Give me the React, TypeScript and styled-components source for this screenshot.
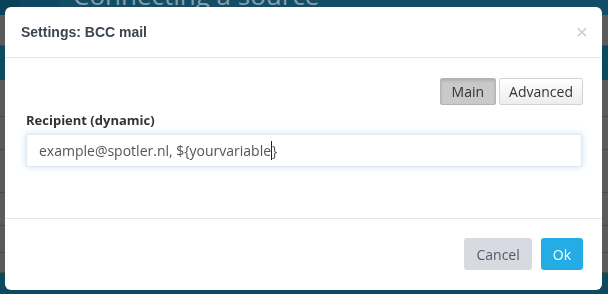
import React from 'react';
import styled, { createGlobalStyle } from 'styled-components';

const GlobalStyle = createGlobalStyle`
  html, body {
    margin: 0;
    padding: 0;
    width: 608px;
    height: 294px;
    overflow: hidden;
    background: #5b5b5b;
  }
  * {
    box-sizing: border-box;
  }
`;

const App = () => {
  return (
    <>
      <GlobalStyle />
      <Page>
        <TopBar>
          <TopBarLogo />
          <TopBarTab />
          <PageTitle>Connecting a source</PageTitle>
        </TopBar>
        <Band tone="gray" size={31} />
        <Band tone="teal" size={34} />
        <Band tone="gray" size={37} />
        <Band tone="gray" size={33} />
        <Band tone="gray" size={43} />
        <Band tone="gray" size={33} />
        <Band tone="gray" size={27} />
        <Band tone="gray" size={20} />
        <Band tone="teal" size={30} />
      </Page>
      <Modal>
        <Header>
          <Title>Settings: BCC mail</Title>
          <Close>×</Close>
        </Header>
        <Body>
          <TabRow>
            <TabButton active>Main</TabButton>
            <TabButton>Advanced</TabButton>
          </TabRow>
          <Label>Recipient (dynamic)</Label>
          <Input>
            example@spotler.nl, $&#123;yourvariabl<Caret>e</Caret>&#125;
          </Input>
        </Body>
        <Footer>
          <FooterButton>Cancel</FooterButton>
          <FooterButton primary>Ok</FooterButton>
        </Footer>
      </Modal>
    </>
  );
};

export default App;

const Page = styled.div`
  display: flex;
  flex-direction: column;
  width: 608px;
  height: 294px;
  overflow: hidden;
`;

const TopBar = styled.div`
  display: flex;
  flex-direction: row;
  align-items: flex-end;
  height: 15px;
  flex-shrink: 0;
  background-color: #114e66;
  overflow: hidden;
`;

const TopBarLogo = styled.div`
  width: 20px;
  height: 15px;
  background-color: #0b4259;
`;

const TopBarTab = styled.div`
  width: 40px;
  height: 15px;
  background-color: #0e4860;
`;

const PageTitle = styled.div`
  margin-left: 13px;
  margin-bottom: 7px;
  font-family: 'Open Sans', sans-serif;
  font-size: 26px;
  line-height: 26px;
  color: #8a9ca8;
  white-space: nowrap;
`;

const Band = styled.div<{ tone: 'gray' | 'teal'; size: number }>`
  height: ${({ size }) => size + 'px'};
  flex-shrink: 0;
  background-color: ${({ tone }) => (tone === 'teal' ? '#0c4a60' : '#5b5b5b')};
  border-bottom: 1px solid ${({ tone }) => (tone === 'teal' ? '#0c4a60' : '#4a4a4a')};
`;

const Modal = styled.div`
  position: fixed;
  left: 5px;
  top: 7px;
  width: 597px;
  height: 283px;
  display: flex;
  flex-direction: column;
  background-color: #ffffff;
  border-radius: 6px;
  overflow: hidden;
`;

const Header = styled.div`
  display: flex;
  flex-direction: row;
  justify-content: space-between;
  align-items: center;
  height: 51px;
  padding: 0 14px 1px 16px;
  border-bottom: 1px solid #e5e5e5;
`;

const Title = styled.div`
  font-family: 'Liberation Sans', Arial, sans-serif;
  font-weight: bold;
  font-size: 14px;
  color: #3b4451;
`;

const Close = styled.div`
  font-family: 'Liberation Sans', Arial, sans-serif;
  font-size: 21px;
  line-height: 20px;
  color: #cccccc;
`;

const Body = styled.div`
  flex: 1;
  display: flex;
  flex-direction: column;
  padding: 20px 19px 0 21px;
`;

const TabRow = styled.div`
  display: flex;
  flex-direction: row;
  justify-content: flex-end;
  gap: 3px;
`;

const TabButton = styled.div<{ active?: boolean }>`
  display: flex;
  align-items: center;
  height: 27px;
  padding: 0 ${({ active }) => (active ? '11px' : '9px')};
  font-family: 'Open Sans', sans-serif;
  font-size: 14px;
  color: #333333;
  border: 1px solid ${({ active }) => (active ? '#b3b3b3' : '#d2d2d2')};
  border-radius: 2px;
  background: ${({ active }) =>
    active ? '#c9c9c9' : 'linear-gradient(#ffffff, #ededed)'};
  box-shadow: ${({ active }) =>
    active ? 'inset 0 2px 3px rgba(0, 0, 0, 0.12)' : 'none'};
`;

const Label = styled.div`
  margin-top: 6px;
  margin-bottom: 5px;
  line-height: 18px;
  font-family: 'Open Sans', sans-serif;
  font-weight: bold;
  font-size: 13px;
  color: #333333;
`;

const Input = styled.div`
  display: flex;
  align-items: center;
  height: 33px;
  margin-right: 1px;
  padding: 0 12px;
  font-family: 'Open Sans', sans-serif;
  font-size: 14px;
  color: #555555;
  white-space: pre;
  border: 1px solid #e3e8ef;
  box-shadow: 0 0 7px rgba(102, 160, 220, 0.35);
`;

const Caret = styled.span`
  border-right: 1px solid #222222;
`;

const Footer = styled.div`
  display: flex;
  flex-direction: row;
  justify-content: flex-end;
  align-items: center;
  gap: 9px;
  height: 72px;
  padding: 0 19px 1px 0;
  border-top: 1px solid #e5e5e5;
`;

const FooterButton = styled.div<{ primary?: boolean }>`
  display: flex;
  align-items: center;
  height: 32px;
  padding: 0 12px;
  font-family: 'Open Sans', sans-serif;
  font-size: 14px;
  border-radius: 3px;
  color: ${({ primary }) => (primary ? '#ffffff' : '#555b66')};
  background-color: ${({ primary }) => (primary ? '#24ade4' : '#d7dae1')};
`;
